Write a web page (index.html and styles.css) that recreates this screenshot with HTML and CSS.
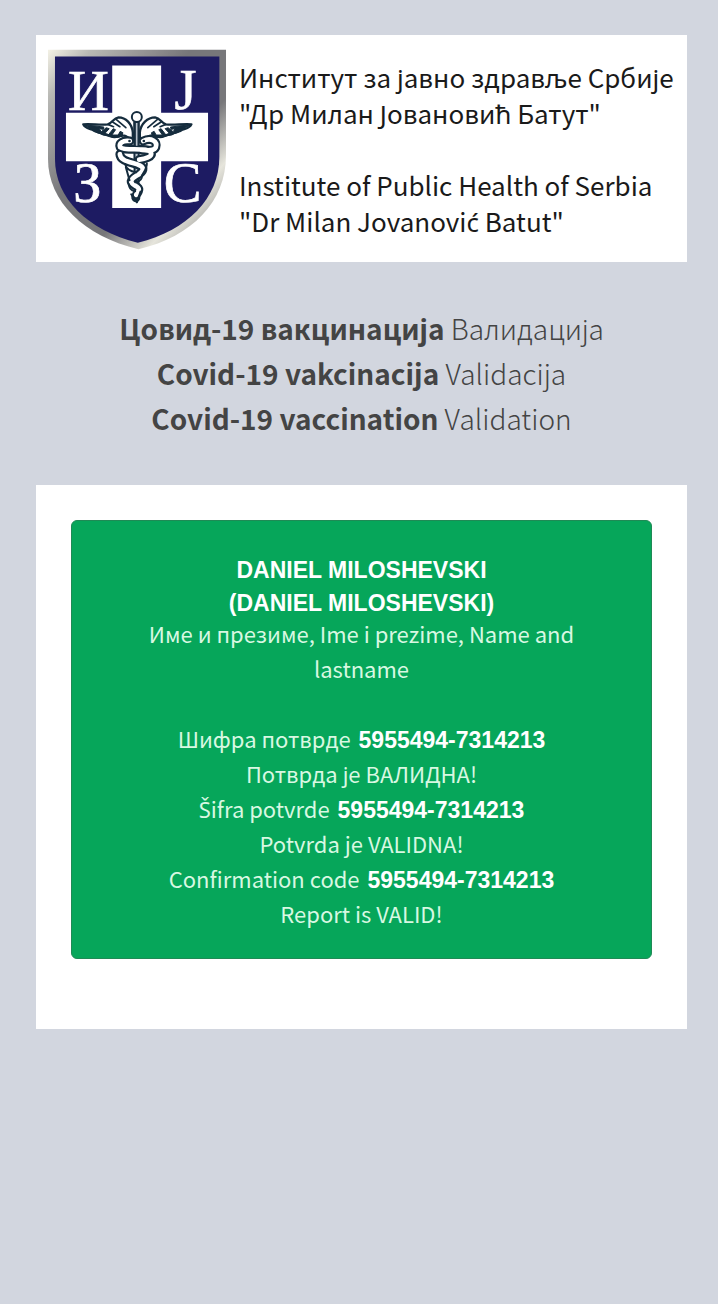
FILE: index.html
```html
<!DOCTYPE html>
<html lang="sr">
<head>
<meta charset="utf-8">
<meta name="viewport" content="width=device-width, initial-scale=1">
<title>Covid-19 vaccination Validation</title>
<link rel="stylesheet" href="styles.css">
</head>
<body>
<header class="banner">
  <svg class="crest" viewBox="30 36 550 612" role="img" aria-label="ИЈЗС">
    <defs>
      <linearGradient id="rim" x1="0" y1="0" x2="1" y2="1">
        <stop offset="0" stop-color="#f4f2e6"/>
        <stop offset=".12" stop-color="#b9b9b5"/>
        <stop offset=".4" stop-color="#77777a"/>
        <stop offset=".62" stop-color="#77777a"/>
        <stop offset=".78" stop-color="#e6e5dc"/>
        <stop offset="1" stop-color="#6f6f72"/>
      </linearGradient>
    </defs>
    <path fill="url(#rim)" d="M36 44H571V360C571 500 470 605 308 643C145 605 36 500 36 372Z"/>
    <path fill="#1d1b62" d="M57 64H551V365C551 490 455 586 306 624C155 586 57 490 57 372Z"/>
    <path fill="#fff" d="M229 91H376V233H517V379H376V519H229V379H90V233H229Z"/>
    <g class="crest-letters">
      <text x="96" y="224">И</text>
      <text x="416" y="222">Ј</text>
      <text x="112" y="502">З</text>
      <text x="384" y="502">С</text>
    </g>
    <g stroke="#152c3d" stroke-linejoin="round" stroke-linecap="round">
      <g fill="#fff" stroke-width="7">
        <path d="M291 292C288 266 270 247 248 247C233 249 229 264 216 268C194 271 168 266 142 268C148 281 160 280 169 284C177 292 187 290 195 294C206 303 218 297 226 303C236 312 252 300 265 302C276 304 276 312 291 311Z"/>
        <path fill="#152c3d" stroke-width="3" d="M144 269L204 276L202 283L190 281L196 290L211 278L220 281L207 295L218 299L232 281L239 284L228 300L247 300L253 289L261 293L259 302L248 307L224 306L184 293Z"/>
        <path fill="none" stroke-width="5" d="M216 268L233 275M229 260L252 275M240 252L270 278"/>
      </g>
      <g fill="#fff" stroke-width="7">
        <path d="M312 292C315 266 335 247 358 247C373 249 377 264 390 268C413 271 440 266 467 268C461 281 449 280 440 284C432 292 422 290 414 294C403 303 391 297 383 303C373 312 357 300 344 302C333 304 333 312 312 311Z"/>
        <path fill="#152c3d" stroke-width="3" d="M464 269L404 276L406 283L418 281L412 290L397 278L388 281L401 295L390 299L376 281L369 284L380 300L361 300L355 289L347 293L349 302L360 307L384 306L424 293Z"/>
        <path fill="none" stroke-width="5" d="M390 268L373 275M377 260L354 275M366 252L336 278"/>
      </g>
      <path fill="#b9c2cc" stroke-width="6" d="M295 262H309L308 488L303 502L297 488Z"/>
      <g fill="none">
        <g stroke-width="27">
          <path d="M282 318C260 315 248 325 253 337C267 350 340 334 346 354C350 365 328 372 310 374"/>
          <path d="M322 318C346 306 366 319 360 337C354 350 335 345 318 345"/>
          <path d="M252 357C253 389 324 380 321 404C317 421 289 423 286 439C285 452 310 452 309 464C308 475 298 480 300 488"/>
        </g>
        <g stroke="#fff" stroke-width="14">
          <path d="M282 318C260 315 248 325 253 337C267 350 340 334 346 354C350 365 328 372 310 374"/>
          <path d="M322 318C346 306 366 319 360 337C354 350 335 345 318 345"/>
          <path d="M252 357C253 389 324 380 321 404C317 421 289 423 286 439C285 452 310 452 309 464C308 472 302 476 301 480"/>
        </g>
        <path stroke-width="6" d="M268 388C272 405 287 410 301 412M318 421C320 435 307 440 298 442M280 449C279 461 289 467 298 469M286 478L303 502L314 470M270 397L281 436M333 385C334 398 326 408 320 419"/>
      </g>
      <path fill="#b9c2cc" stroke-width="4" d="M298 262H307V334H298Z"/>
      <circle cx="303" cy="246" r="15" fill="#fff" stroke-width="6"/>
      <g fill="#152c3d" stroke="none"><circle cx="281" cy="318" r="4"/><circle cx="324" cy="318" r="4"/></g>
    </g>
  </svg>
  <div class="institute">
    <p>Институт за јавно здравље Србије<br>"Др Милан Јовановић Батут"</p>
    <p>Institute of Public Health of Serbia<br>"Dr Milan Jovanovi<span class="accented">ć</span> Batut"</p>
  </div>
</header>
<main>
  <h1 class="title">
    <b>Цовид-19 вакцинација</b> Валидација<br>
    <b>Covid-19 vakcinacija</b> Validacija<br>
    <b>Covid-19 vaccination</b> Validation
  </h1>
  <section class="card">
    <div class="alert">
      <p class="name">DANIEL MILOSHEVSKI<br>(DANIEL MILOSHEVSKI)</p>
      <p class="caption">Име и презиме, Ime i prezime, Name and lastname</p>
      <p>Шифра потврде <b class="code">5955494-7314213</b><br>Потврда је ВАЛИДНА!</p>
      <p><span class="accented">Š</span>ifra potvrde <b class="code">5955494-7314213</b><br>Potvrda je VALIDNA!</p>
      <p>Confirmation code <b class="code">5955494-7314213</b><br>Report is VALID!</p>
    </div>
  </section>
</main>
</body>
</html>
```
FILE: styles.css
```css
* {
  box-sizing: border-box;
}

body {
  margin: 0;
  padding: 35px 31px 35px 36px;
  min-height: 100vh;
  background: #d2d6df;
  font-family: "Noto Sans CJK SC", "Noto Sans", sans-serif;
}

p {
  margin: 0;
}

.banner {
  display: flex;
  align-items: flex-start;
  gap: 10px;
  padding: 12px 10px 11px;
  background: #fff;
}

.crest {
  flex: none;
  width: 183px;
  height: 204px;
}

.crest-letters {
  fill: #fff;
  stroke: #fff;
  stroke-width: 2px;
  font-family: "Liberation Serif", serif;
  font-size: 170px;
}

.institute {
  display: grid;
  gap: 36px;
  padding-top: 12px;
  color: #1a1a1a;
  font-size: 26px;
  line-height: 36px;
  white-space: nowrap;
}

.accented {
  font-family: "Noto Sans", sans-serif;
  line-height: 1;
}

.title {
  margin: 44px 0;
  color: #444;
  font-size: 28px;
  font-weight: 300;
  line-height: 45px;
  text-align: center;
}

.title b {
  font-weight: 700;
}

.card {
  padding: 35px 35px 70px;
  background: #fff;
}

.alert {
  padding: 33px 35px 27px;
  border: 1px solid #1f8a55;
  border-radius: 6px;
  background: #06a65a;
  color: #d8f8e2;
  font-size: 22px;
  line-height: 35px;
  text-align: center;
}

.name {
  margin-bottom: -4px;
  color: #fff;
  font-family: "Liberation Sans", sans-serif;
  font-size: 23px;
  font-weight: 700;
  line-height: 33px;
}

.caption {
  margin-bottom: 35px;
}

.code {
  margin-left: 3px;
  color: #fff;
  font-family: "Liberation Sans", sans-serif;
  font-size: 23px;
  line-height: 1;
}
```
